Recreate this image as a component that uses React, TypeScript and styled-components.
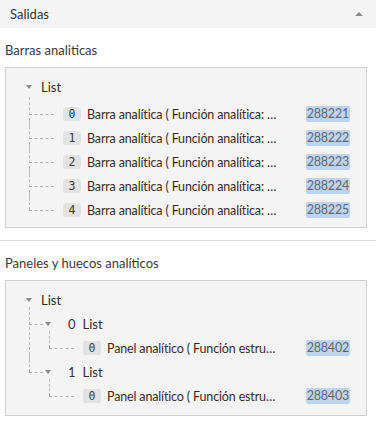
import React from "react";
import styled, { createGlobalStyle } from "styled-components";

const GlobalStyle = createGlobalStyle`
  body {
    margin: 0;
    background: #ffffff;
    font-family: Lato, "Open Sans", "Liberation Sans", sans-serif;
    color: #333333;
  }
`;

/**
 *  Panel header
 */

const Header = styled.div`
  height: 28px;
  display: flex;
  align-items: center;
  justify-content: space-between;
  padding: 0 13px 0 10px;
  background: #f4f4f4;
  font-size: 13px;
  color: #333;
`;

const CaretUp = styled.span`
  width: 0;
  height: 0;
  border-left: 4px solid transparent;
  border-right: 4px solid transparent;
  border-bottom: 4px solid #8a8a8a;
`;

/**
 *  Sections
 */

const Section = styled.section<{ last?: boolean }>`
  padding: 13px 9px 12px 5px;
  border-bottom: ${props => (props.last ? "none" : "1px solid #dcdcdc")};
`;

const SectionTitle = styled.div`
  height: 18px;
  line-height: 18px;
  font-size: 13px;
  color: #3a3a3a;
  margin-bottom: 8px;
`;

const TreeBox = styled.div<{ bottom: number }>`
  background: #f4f4f4;
  border: 1px solid #cfcfcf;
  padding: 7px 16px ${props => props.bottom}px 0;
`;

/**
 *  Tree
 */

const Row = styled.div<{ indent: number }>`
  height: 24px;
  display: flex;
  align-items: center;
  padding-left: ${props => props.indent}px;
  font-size: 13px;
`;

const CaretDown = styled.span`
  flex: none;
  width: 0;
  height: 0;
  border-left: 3.5px solid transparent;
  border-right: 3.5px solid transparent;
  border-top: 4px solid #8a8a8a;
`;

const ListLabel = styled.span<{ gap: number }>`
  margin-left: ${props => props.gap}px;
  color: #3b2d24;
`;

const KeyLabel = styled.span`
  margin-left: 17px;
  color: #3d2f47;
`;

const Children = styled.ul<{ offset: number; top: number }>`
  list-style: none;
  margin: ${props => props.top}px 0 0 ${props => props.offset}px;
  padding: 0;
`;

const Item = styled.li<{ leaf?: boolean }>`
  position: relative;

  &::before {
    content: "";
    position: absolute;
    left: 0;
    top: -5px;
    bottom: 0;
    border-left: 1px dashed #b8b8b8;
  }

  &:last-child::before {
    bottom: auto;
    height: 17px;
  }

  &::after {
    content: "";
    position: absolute;
    left: 0;
    top: 12px;
    width: ${props => (props.leaf ? 25 : 14)}px;
    border-top: 1px dashed #b8b8b8;
  }
`;

const IndexBadge = styled.span`
  flex: none;
  width: 18px;
  height: 14px;
  line-height: 14px;
  text-align: center;
  border-radius: 3px;
  background: #e2e2e2;
  color: #3c3c3c;
  font-family: "DejaVu Sans Mono", "Liberation Mono", monospace;
  font-size: 11.5px;
`;

const ItemText = styled.span`
  flex: 1;
  min-width: 0;
  margin-left: 6px;
  white-space: nowrap;
  overflow: hidden;
  text-overflow: ellipsis;
  font-size: 12.5px;
  letter-spacing: -0.15px;
  color: #3b2d24;
`;

const IdBadge = styled.span`
  flex: none;
  margin-left: 10px;
  height: 16px;
  line-height: 16px;
  padding: 0 1px;
  border-radius: 2px;
  background: #bdd4ef;
  color: #5d6878;
  font-size: 12.5px;
  letter-spacing: -0.2px;
`;

type Leaf = { index: number; text: string; id: string };

const LeafRow = ({ index, text, id }: Leaf) => (
  <Item leaf>
    <Row indent={34}>
      <IndexBadge>{index}</IndexBadge>
      <ItemText>{text}</ItemText>
      <IdBadge>{id}</IdBadge>
    </Row>
  </Item>
);

const barras: Leaf[] = [
  { index: 0, text: "Barra analítica ( Función analítica: …", id: "288221" },
  { index: 1, text: "Barra analítica ( Función analítica: …", id: "288222" },
  { index: 2, text: "Barra analítica ( Función analítica: …", id: "288223" },
  { index: 3, text: "Barra analítica ( Función analítica: …", id: "288224" },
  { index: 4, text: "Barra analítica ( Función analítica: …", id: "288225" }
];

const paneles: Leaf[][] = [
  [{ index: 0, text: "Panel analítico ( Función estru…", id: "288402" }],
  [{ index: 0, text: "Panel analítico ( Función estru…", id: "288403" }]
];

const App: React.FC = () => {
  return (
    <>
      <GlobalStyle />
      <Header>
        Salidas
        <CaretUp />
      </Header>

      <Section>
        <SectionTitle>Barras analiticas</SectionTitle>
        <TreeBox bottom={5}>
          <Row indent={20}>
            <CaretDown />
            <ListLabel gap={9}>List</ListLabel>
          </Row>
          <Children offset={23} top={3}>
            {barras.map(b => (
              <LeafRow key={b.id} {...b} />
            ))}
          </Children>
        </TreeBox>
      </Section>

      <Section last>
        <SectionTitle>Paneles y huecos analíticos</SectionTitle>
        <TreeBox bottom={7}>
          <Row indent={20}>
            <CaretDown />
            <ListLabel gap={9}>List</ListLabel>
          </Row>
          <Children offset={23} top={0}>
            {paneles.map((group, i) => (
              <Item key={i}>
                <Row indent={16}>
                  <CaretDown />
                  <KeyLabel>{i}</KeyLabel>
                  <ListLabel gap={7}>List</ListLabel>
                </Row>
                <Children offset={20} top={0}>
                  {group.map(p => (
                    <LeafRow key={p.id} {...p} />
                  ))}
                </Children>
              </Item>
            ))}
          </Children>
        </TreeBox>
      </Section>
    </>
  );
};

export default App;
